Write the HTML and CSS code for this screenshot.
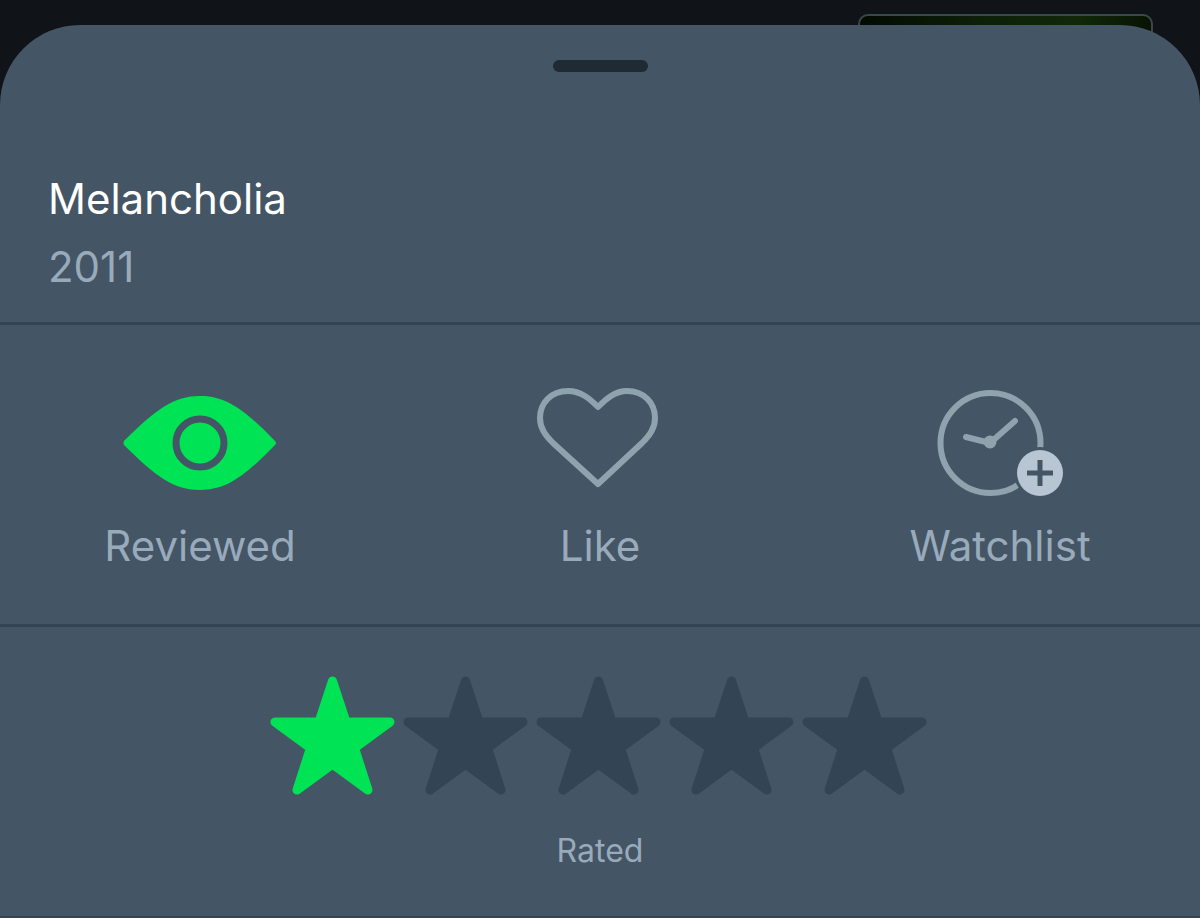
FILE: index.html
```html
<!DOCTYPE html>
<html lang="en">
<head>
  <meta charset="UTF-8">
  <title>Melancholia (2011)</title>
  <meta name="viewport" content="width=device-width, initial-scale=1.0">
  <link rel="stylesheet" href="styles.css">
</head>
<body>
  <div class="poster"></div>

  <main class="sheet">
    <header class="film">
      <div class="handle"></div>
      <h1>Melancholia</h1>
      <p class="year">2011</p>
    </header>

    <div class="actions">
      <button type="button" class="action">
        <svg class="icon" viewBox="0 0 160 112" aria-hidden="true">
          <path class="eye" d="M4 59Q3 57 4 55C36 23 54 10 80 10S124 23 155 55Q157 57 155 59C124 91 106 104 80 104S36 91 4 59Z"/>
          <circle class="iris" cx="80" cy="57" r="24"/>
        </svg>
        <span>Reviewed</span>
      </button>
      <button type="button" class="action">
        <svg class="icon" viewBox="0 0 160 112" aria-hidden="true">
          <path class="line" d="M78 21C70 13 61 5 48 5C31 5 20 17 20 32C20 42 25 49 33 57L78 98L122 57C130 49 135 42 135 32C135 17 124 5 107 5C95 5 86 13 78 21Z"/>
        </svg>
        <span>Like</span>
      </button>
      <button type="button" class="action">
        <svg class="icon" viewBox="0 0 160 112" aria-hidden="true">
          <circle class="line" cx="70.5" cy="57" r="50"/>
          <path class="line" d="M46 51L70 57L95 35"/>
          <circle class="hub" cx="70" cy="56" r="6.5"/>
          <circle class="badge-gap" cx="120" cy="87" r="26"/>
          <circle class="badge" cx="120" cy="87" r="23"/>
          <path class="plus" d="M107 87H133M120 74V100"/>
        </svg>
        <span>Watchlist</span>
      </button>
    </div>

    <fieldset class="rating">
      <div class="stars">
        <label class="star on">
          <input type="radio" name="rating" value="1" aria-label="1 star" checked>
          <svg viewBox="0 0 125 119" aria-hidden="true"><path d="M62.5 5L76 46H120L84.5 72L98 114L62.5 88L27 114L40.5 72L5 46H49Z"/></svg>
        </label>
        <label class="star">
          <input type="radio" name="rating" value="2" aria-label="2 stars">
          <svg viewBox="0 0 125 119" aria-hidden="true"><path d="M62.5 5L76 46H120L84.5 72L98 114L62.5 88L27 114L40.5 72L5 46H49Z"/></svg>
        </label>
        <label class="star">
          <input type="radio" name="rating" value="3" aria-label="3 stars">
          <svg viewBox="0 0 125 119" aria-hidden="true"><path d="M62.5 5L76 46H120L84.5 72L98 114L62.5 88L27 114L40.5 72L5 46H49Z"/></svg>
        </label>
        <label class="star">
          <input type="radio" name="rating" value="4" aria-label="4 stars">
          <svg viewBox="0 0 125 119" aria-hidden="true"><path d="M62.5 5L76 46H120L84.5 72L98 114L62.5 88L27 114L40.5 72L5 46H49Z"/></svg>
        </label>
        <label class="star">
          <input type="radio" name="rating" value="5" aria-label="5 stars">
          <svg viewBox="0 0 125 119" aria-hidden="true"><path d="M62.5 5L76 46H120L84.5 72L98 114L62.5 88L27 114L40.5 72L5 46H49Z"/></svg>
        </label>
      </div>
      <p class="rated">Rated</p>
    </fieldset>
  </main>
</body>
</html>
```
FILE: styles.css
```css
* { box-sizing: border-box; }
body { margin: 0; padding-top: 25px; min-height: 100vh; display: flex; flex-direction: column; font-family: Inter, sans-serif; background: #101418; color: #99aabb; }
h1, p { margin: 0; font-size: 42px; line-height: 68px; font-weight: 400; }
h1 { color: #fff; }

/* film poster peeking out behind the sheet */
.poster { position: absolute; top: 14px; right: 47px; width: 295px; height: 80px; border: 2px solid #3c4747; border-radius: 10px; background: linear-gradient(90deg, #020a02, #0c1f08 40%, #102808 75%, #081304); }

.sheet { position: relative; flex: 1; background: #445565; border-radius: 80px 80px 0 0; }
.film { padding: 35px 48px 21px; border-bottom: 3px solid #334455; }
.handle { width: 95px; height: 12px; margin: 0 auto 93px; border-radius: 6px; background: #1f2a33; }

.actions { display: grid; grid-template-columns: repeat(3, 1fr); border-bottom: 3px solid #334455; }
.action { display: flex; flex-direction: column; align-items: center; gap: 16px; padding: 61px 0 46px; border: none; background: none; color: inherit; font: 42px/64px Inter, sans-serif; cursor: pointer; }
.icon { width: 160px; height: 112px; fill: none; stroke-linecap: round; stroke-linejoin: round; }
.eye { fill: #00e354; }
.iris { stroke: #445565; stroke-width: 7; }
.line { stroke: #8fa3ae; stroke-width: 6; }
.hub { fill: #8fa3ae; }
.badge-gap { fill: #445565; }
.badge { fill: #b8c6d4; }
.plus { stroke: #445565; stroke-width: 5; stroke-linecap: butt; }

.rating { margin: 0; padding: 49px 0 41px; border: none; border-bottom: 2px solid #334455; text-align: center; }
.stars { display: flex; justify-content: center; gap: 8px; padding-right: 4px; }
.star { position: relative; cursor: pointer; }
.star input { position: absolute; inset: 0; width: 100%; height: 100%; margin: 0; opacity: 0; }
.star svg { display: block; width: 125px; height: 119px; fill: #334455; stroke: #334455; stroke-width: 9; stroke-linejoin: round; }
.star.on svg { fill: #00e354; stroke: #00e354; }
.rated { margin-top: 32px; font-size: 32px; line-height: 48px; }
```
